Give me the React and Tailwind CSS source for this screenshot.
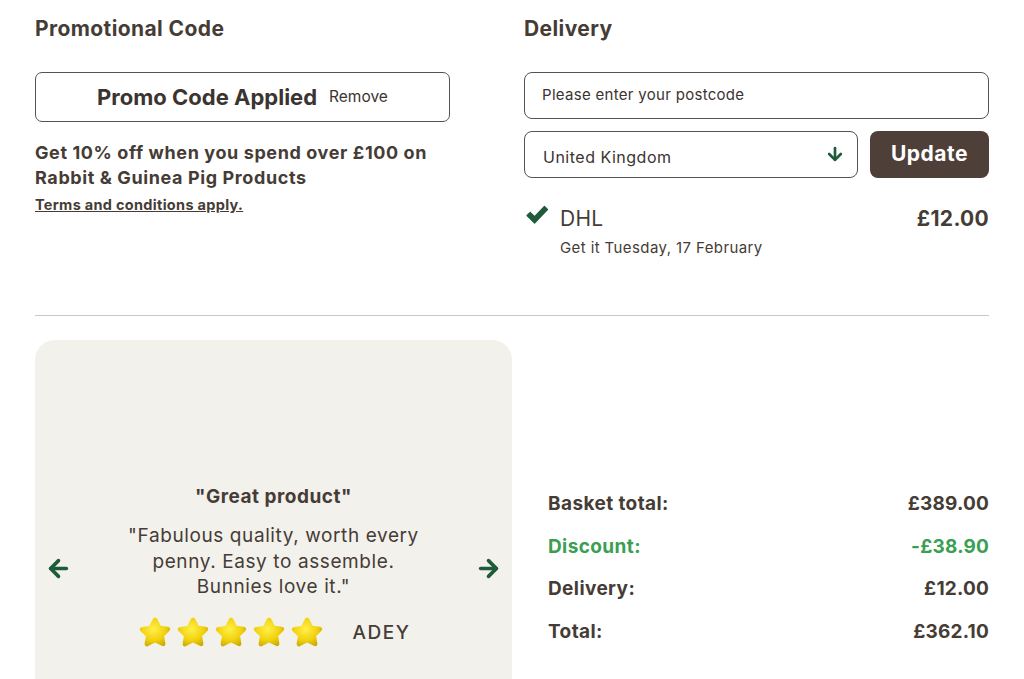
import { ArrowLeft, ArrowRight, ArrowDown } from "lucide-react";

const font = { fontFamily: "Inter, 'Open Sans', sans-serif" };

function Star() {
  return (
    <svg width="36" height="34" viewBox="0 0 36 34">
      <defs>
        <radialGradient id="sg" cx="45%" cy="40%" r="65%">
          <stop offset="0%" stopColor="#fff04a" />
          <stop offset="60%" stopColor="#f2d20e" />
          <stop offset="100%" stopColor="#c9a805" />
        </radialGradient>
      </defs>
      <path
        d="M18 2.5c1.2 0 1.9.8 2.5 2l3.2 6.3 6.8 1c1.4.2 2.3.7 2.6 1.7.3 1-.1 1.9-1.1 2.8l-4.9 4.8 1.2 6.8c.2 1.4-.1 2.4-.9 2.9-.8.6-1.8.5-3-.2L18 27.4l-6.4 3.4c-1.2.7-2.2.8-3 .2-.8-.5-1.1-1.5-.9-2.9l1.2-6.8-4.9-4.8c-1-.9-1.4-1.8-1.1-2.8.3-1 1.2-1.5 2.6-1.7l6.8-1 3.2-6.3c.6-1.2 1.3-2 2.5-2z"
        fill="url(#sg)"
      />
    </svg>
  );
}

function Row({ label, value, green }) {
  return (
    <div className={`flex justify-between text-[19px] leading-[26px] font-bold ${green ? "text-[#3a9f52]" : "text-[#463c36]"}`}>
      <span className="tracking-[0.4px]">{label}</span>
      <span className="tracking-[0.2px]">{value}</span>
    </div>
  );
}

export default function App() {
  return (
    <div style={font} className="bg-white w-[1024px] h-[679px] overflow-hidden px-[35px] text-[#463c36]">
      {/* top two columns */}
      <div className="flex justify-between pt-[14px]">
        <div className="w-[415px]">
          <h2 className="text-[21px] font-bold leading-[29px] tracking-[0.4px]">Promotional Code</h2>
          <div className="mt-[29px] h-[50px] border border-[#5a514c] rounded-[7px] flex items-center justify-center gap-[12px]">
            <span className="text-[22px] font-bold text-[#3b3430]">Promo Code Applied</span>
            <span className="text-[15.5px] text-[#3b3430]">Remove</span>
          </div>
          <p className="mt-[18px] text-[18px] font-bold leading-[25px] tracking-[0.6px]">
            Get 10% off when you spend over £100 on Rabbit &amp; Guinea Pig Products
          </p>
          <a className="block mt-[4px] text-[14.5px] font-bold underline tracking-[0.3px]">Terms and conditions apply.</a>
        </div>

        <div className="w-[465px]">
          <h2 className="text-[21px] font-bold leading-[29px] tracking-[0.4px]">Delivery</h2>
          <div className="mt-[29px] h-[47px] border border-[#5a514c] rounded-[8px] flex items-center px-[17px] text-[15px] tracking-[0.3px] text-[#3b3430]">
            Please enter your postcode
          </div>
          <div className="mt-[12px] flex gap-[12px]">
            <div className="flex-1 h-[47px] border border-[#5a514c] rounded-[8px] flex items-center justify-between pl-[18px] pr-[12px] pt-[4px]">
              <span className="text-[16px] tracking-[0.5px] text-[#3b3430]">United Kingdom</span>
              <ArrowDown size={20} strokeWidth={3.2} className="text-[#1e5b3a] -mt-[6px]" />
            </div>
            <button className="w-[119px] h-[47px] rounded-[8px] bg-[#4e4039] text-white text-[21px] font-bold tracking-[0.5px] pb-[2px]">
              Update
            </button>
          </div>
          <div className="mt-[25px] flex">
            <svg width="24" height="20" viewBox="0 0 24 20" className="mt-[2px] ml-[1px]">
              <path d="M2 10.5l3.2-3 4.4 4.2L19.4 1.5 22.5 4.5 9.6 18z" fill="#1e5b3a" strokeLinejoin="round" stroke="#1e5b3a" strokeWidth="1.2" />
            </svg>
            <div className="ml-[11px] flex-1">
              <div className="flex justify-between items-center">
                <span className="text-[21px] leading-[28px] tracking-[0.3px]">DHL</span>
                <span className="text-[21px] font-bold tracking-[0.3px]">£12.00</span>
              </div>
              <div className="text-[15px] mt-[2px] tracking-[0.4px]">Get it Tuesday, 17 February</div>
            </div>
          </div>
        </div>
      </div>

      <div className="mt-[56px] border-t border-[#c9c9c9]" />

      {/* bottom */}
      <div className="mt-[24px] flex justify-between">
        <div className="w-[477px] h-[456px] bg-[#f3f1ec] rounded-[20px] flex items-center justify-between px-[10px]">
          <ArrowLeft size={27} strokeWidth={3.2} className="text-[#1e5b3a]" />
          <div className="self-start mt-[144px] flex flex-col items-center text-center">
            <div className="text-[19px] leading-[26px] font-bold tracking-[0.5px]">"Great product"</div>
            <p className="mt-[13px] text-[19px] leading-[25.5px] tracking-[0.6px]">
              "Fabulous quality, worth every
              <br />
              penny. Easy to assemble.
              <br />
              Bunnies love it."
            </p>
            <div className="mt-[15px] flex items-center">
              <div className="flex gap-[2px]">
                <Star /><Star /><Star /><Star /><Star />
              </div>
              <span className="ml-[28px] mt-[4px] text-[19px] font-medium tracking-[1.5px]">ADEY</span>
            </div>
          </div>
          <ArrowRight size={27} strokeWidth={3.2} className="text-[#1e5b3a]" />
        </div>

        <div className="w-[441px] pt-[151px] flex flex-col gap-[16.5px]">
          <Row label="Basket total:" value="£389.00" />
          <Row label="Discount:" value="-£38.90" green />
          <Row label="Delivery:" value="£12.00" />
          <Row label="Total:" value="£362.10" />
        </div>
      </div>
    </div>
  );
}
